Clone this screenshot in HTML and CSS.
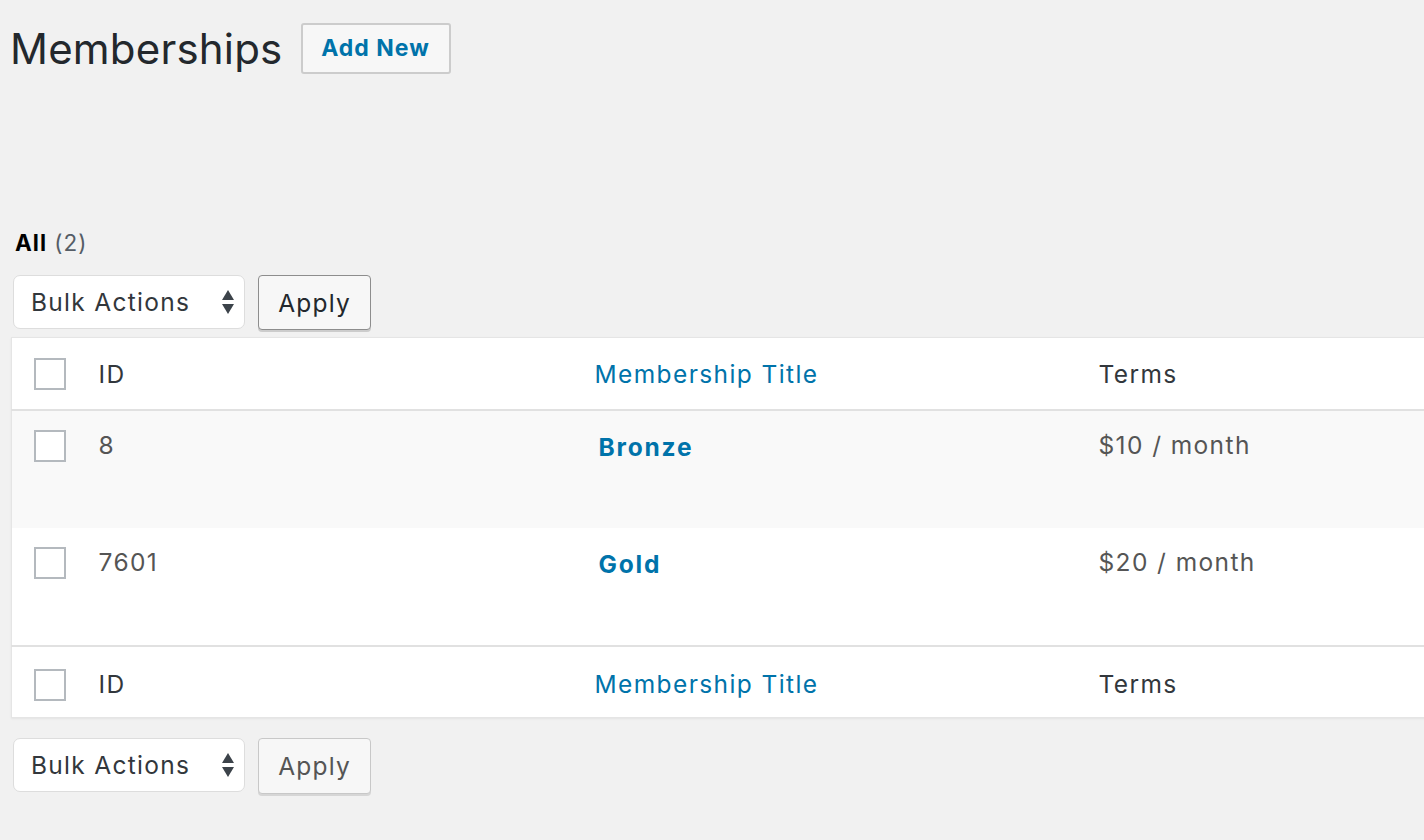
FILE: index.html
```html
<!DOCTYPE html>
<html lang="en">
<head>
	<meta charset="UTF-8">
	<title>Memberships</title>
	<link rel="stylesheet" href="styles.css">
</head>
<body>
	<div class="wrap">
		<div class="page-head">
			<h1 class="page-title">Memberships</h1>
			<a href="javascript:;" class="add-new">Add New</a>
		</div>

		<ul class="subsubsub">
			<li><span class="current">All</span> <span class="count">(2)</span></li>
		</ul>

		<div class="tablenav">
			<div class="fake-select">
				<span>Bulk Actions</span>
				<svg class="arrows" width="14" height="26" viewBox="0 0 14 26"><path d="M7 1 L13 11 H1 Z" fill="#3c434a"/><path d="M1 15 H13 L7 25 Z" fill="#3c434a"/></svg>
			</div>
			<a href="javascript:;" class="btn-apply">Apply</a>
		</div>

		<table class="list-table">
			<colgroup>
				<col class="col-cb">
				<col class="col-id">
				<col class="col-title">
				<col class="col-terms">
			</colgroup>
			<thead>
				<tr>
					<td class="cb"><span class="checkbox"></span></td>
					<th>ID</th>
					<th><a href="javascript:;">Membership Title</a></th>
					<th>Terms</th>
				</tr>
			</thead>
			<tbody>
				<tr class="alt">
					<td class="cb"><span class="checkbox"></span></td>
					<td>8</td>
					<td><a href="javascript:;" class="row-title">Bronze</a></td>
					<td>$10 / month</td>
				</tr>
				<tr>
					<td class="cb"><span class="checkbox"></span></td>
					<td>7601</td>
					<td><a href="javascript:;" class="row-title">Gold</a></td>
					<td>$20 / month</td>
				</tr>
			</tbody>
			<tfoot>
				<tr>
					<td class="cb"><span class="checkbox"></span></td>
					<th>ID</th>
					<th><a href="javascript:;">Membership Title</a></th>
					<th>Terms</th>
				</tr>
			</tfoot>
		</table>

		<div class="tablenav bottom">
			<div class="fake-select">
				<span>Bulk Actions</span>
				<svg class="arrows" width="14" height="26" viewBox="0 0 14 26"><path d="M7 1 L13 11 H1 Z" fill="#3c434a"/><path d="M1 15 H13 L7 25 Z" fill="#3c434a"/></svg>
			</div>
			<a href="javascript:;" class="btn-apply disabled">Apply</a>
		</div>
	</div>
</body>
</html>
```

FILE: styles.css
```css
html,body{
	margin:0;
	background: #f1f1f1;
	overflow: hidden;
}
body{
	font-family: Inter, "Liberation Sans", sans-serif;
	color: #23282d;
}
a{
	text-decoration: none;
}
.wrap{
	width: 1500px;
	padding: 0 0 0 11px;
}

.page-head{
	display: flex;
	align-items: center;
	gap: 18px;
	padding-top: 23px;
}
.page-title{
	margin: 0;
	font-size: 42px;
	font-weight: 400;
	line-height: 50px;
	margin-left: -1px;
	letter-spacing: 0.2px;
	color: #23282d;
}
.add-new{
	display: block;
	box-sizing: border-box;
	width: 150px;
	height: 51px;
	line-height: 47px;
	text-align: center;
	border: 2px solid #ccc;
	border-radius: 3px;
	background: #f7f7f7;
	color: #0073aa;
	font-size: 23px;
	font-weight: 700;
	letter-spacing: 1px;
}

.subsubsub{
	list-style: none;
	margin: 155px 0 0 4px;
	padding: 0;
	font-size: 22.5px;
	letter-spacing: 1px;
	line-height: 28px;
}
.subsubsub .current{
	font-weight: 700;
	color: #000;
}
.subsubsub .count{
	color: #555d66;
}

.tablenav{
	display: flex;
	align-items: flex-start;
	gap: 13px;
	margin: 18px 0 7px 2px;
}
.tablenav.bottom{
	margin-top: 20px;
}
.fake-select{
	box-sizing: border-box;
	width: 232px;
	height: 54px;
	display: flex;
	align-items: center;
	justify-content: space-between;
	padding: 0 9px 0 17px;
	background: #fff;
	border: 1px solid #ddd;
	border-radius: 7px;
	font-size: 24.5px;
	letter-spacing: 1.3px;
	color: #32373c;
}
.btn-apply{
	box-sizing: border-box;
	display: block;
	width: 113px;
	height: 55px;
	line-height: 55px;
	text-align: center;
	background: #f7f7f7;
	border: 1px solid #8d8d8d;
	border-radius: 4px;
	box-shadow: 0 2px 0 #ccc;
	color: #23282d;
	font-size: 24.5px;
	letter-spacing: 1.2px;
}
.btn-apply.disabled{
	border-color: #c8c8c8;
	color: #555;
	height: 56px;
	box-shadow: 0 2px 0 #d6d6d6;
}

.list-table{
	table-layout: fixed;
	border-collapse: collapse;
	width: 1500px;
	background: #fff;
	border: 1px solid #e5e5e5;
	box-shadow: 0 1px 2px rgba(0,0,0,0.06);
	font-size: 24.5px;
	letter-spacing: 1.4px;
}
.col-cb{ width: 75px; }
.col-id{ width: 496px; }
.col-title{ width: 504px; }
.list-table th,
.list-table td{
	text-align: left;
	font-weight: 400;
	padding: 0 12px;
}
.list-table thead tr,
.list-table tfoot tr{
	height: 72px;
}
.list-table thead th,
.list-table tfoot th{
	vertical-align: middle;
	padding-top: 1px;
	color: #32373c;
}
.list-table tfoot th{
	padding-top: 5px;
}
.list-table thead tr{
	border-bottom: 2px solid #e1e1e1;
}
.list-table tfoot tr{
	border-top: 2px solid #e1e1e1;
}
.list-table th a{
	color: #0073aa;
}
.list-table tbody tr{
	height: 118px;
}
.list-table tbody tr.alt{
	background: #f9f9f9;
}
.list-table tbody td{
	vertical-align: top;
	padding-top: 19px;
	line-height: 30px;
	color: #555;
}
.list-table td.cb{
	padding: 2px 0 0 22px;
	vertical-align: middle;
}
.list-table tfoot td.cb{
	padding-top: 6px;
}
.list-table tbody td.cb{
	vertical-align: top;
	padding-top: 19px;
}
.checkbox{
	display: block;
	box-sizing: border-box;
	width: 32px;
	height: 32px;
	border: 2px solid #b4b9be;
	background: #fff;
}
.row-title{
	display: inline-block;
	margin-left: 4px;
	margin-top: 2px;
	font-weight: 700;
	letter-spacing: 1.8px;
	color: #0073aa;
}
```
